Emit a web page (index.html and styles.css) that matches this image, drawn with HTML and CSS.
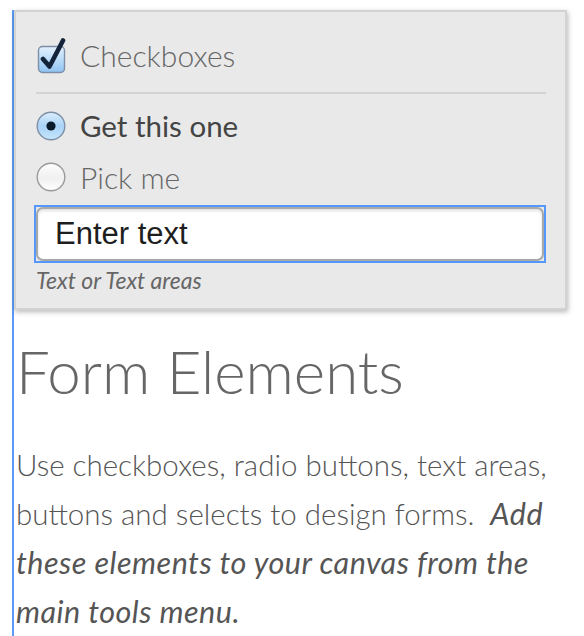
FILE: index.html
```html
<!DOCTYPE html>
<html>
<head>
<meta charset="utf-8">
<link rel="stylesheet" href="styles.css">
</head>
<body>
<div class="canvas">
  <div class="panel">
    <label class="row row-check">
      <svg class="box" width="30" height="36" viewBox="0 0 30 36">
        <defs>
          <linearGradient id="cb" x1="0" y1="0" x2="0" y2="1">
            <stop offset="0" stop-color="#e4f1fd"/>
            <stop offset="0.5" stop-color="#b9dbf8"/>
            <stop offset="1" stop-color="#8fc3f2"/>
          </linearGradient>
        </defs>
        <rect x="1.5" y="8.5" width="26" height="26" rx="4" fill="url(#cb)" stroke="#7d8ea6" stroke-width="1.4"/>
        <path d="M6 21 L12.5 28.5 L26 2.5" fill="none" stroke="#12233a" stroke-width="4.6" stroke-linecap="round" stroke-linejoin="round"/>
      </svg>
      <span class="label light">Checkboxes</span>
    </label>
    <div class="divider"></div>
    <label class="row row-radio1">
      <svg class="radio" width="30" height="30" viewBox="0 0 30 30">
        <defs>
          <linearGradient id="rb" x1="0" y1="0" x2="0" y2="1">
            <stop offset="0" stop-color="#dbeefd"/>
            <stop offset="0.5" stop-color="#a9d2f7"/>
            <stop offset="1" stop-color="#c6e6fc"/>
          </linearGradient>
        </defs>
        <circle cx="15" cy="15" r="13.8" fill="url(#rb)" stroke="#7f8fa6" stroke-width="1.4"/>
        <circle cx="15" cy="15" r="4.6" fill="#0d1a2c"/>
      </svg>
      <span class="label strong">Get this one</span>
    </label>
    <label class="row row-radio2">
      <svg class="radio" width="30" height="30" viewBox="0 0 30 30">
        <defs>
          <linearGradient id="rw" x1="0" y1="0" x2="0" y2="1">
            <stop offset="0" stop-color="#fdfdfd"/>
            <stop offset="0.55" stop-color="#f0f0f0"/>
            <stop offset="1" stop-color="#ffffff"/>
          </linearGradient>
        </defs>
        <circle cx="15" cy="15" r="13.8" fill="url(#rw)" stroke="#9a9a9a" stroke-width="1.4"/>
      </svg>
      <span class="label light">Pick me</span>
    </label>
    <div class="field">
      <div class="input">Enter text</div>
    </div>
    <div class="caption">Text or Text areas</div>
  </div>
  <h1 class="title">Form Elements</h1>
  <p class="desc">Use checkboxes, radio buttons, text areas,<br>buttons and selects to design forms.&nbsp; <em>Add<br>these elements to your canvas from the<br>main tools menu.</em></p>
</div>
</body>
</html>
```
FILE: styles.css
```css
html, body {
  margin: 0;
  padding: 0;
  background: #ffffff;
}
body {
  width: 584px;
  height: 636px;
  overflow: hidden;
  font-family: "Lato", "Liberation Sans", sans-serif;
}
.canvas {
  margin-left: 12px;
  border-left: 2px solid #5b9bf7;
  min-height: 636px;
  box-sizing: border-box;
}
.panel {
  margin-top: 10px;
  width: 553px;
  box-sizing: border-box;
  background: #e9e9e9;
  border: 2px solid #d2d2d2;
  box-shadow: 1px 2px 5px rgba(0, 0, 0, 0.28);
  padding: 23px 19px 16px 20px;
}
.row {
  display: flex;
  align-items: center;
  height: 40px;
}
.row-check {
  align-items: flex-end;
}
.row-check .box {
  margin-left: 1px;
  margin-bottom: 1px;
}
.row-check .label {
  margin-left: 13px;
  padding-bottom: 2px;
}
.label {
  font-size: 30px;
  line-height: 36px;
}
.light {
  font-weight: 300;
  color: #666;
}
.strong {
  font-size: 29.5px;
  font-weight: 400;
  color: #444;
}
.radio {
  margin-left: 0;
  margin-right: 14px;
}
.divider {
  height: 2px;
  background: #d3d3d3;
  margin-top: 17px;
}
.row-radio1 {
  margin-top: 12px;
}
.row-radio2 {
  margin-top: 11px;
}
.field {
  margin-top: 8px;
  margin-left: -2px;
  border: 2px solid #5597fb;
  height: 58px;
  box-sizing: border-box;
}
.input {
  height: 100%;
  box-sizing: border-box;
  background: #fff;
  border: 2px solid #a9a9a9;
  border-radius: 7px;
  box-shadow: inset 0 2px 3px rgba(0, 0, 0, 0.12);
  font-family: "Liberation Sans", Arial, sans-serif;
  font-size: 31px;
  line-height: 50px;
  color: #1e1e1e;
  padding-left: 17px;
}
.caption {
  margin-top: 5px;
  font-style: italic;
  font-size: 23px;
  line-height: 24px;
  color: #666;
}
.title {
  margin: 21px 0 0 2px;
  font-weight: 300;
  font-size: 60px;
  line-height: 80px;
  color: #666;
}
.desc {
  margin: 30px 0 0 2px;
  font-weight: 300;
  font-size: 29.5px;
  line-height: 48px;
  color: #555;
  white-space: nowrap;
}
.desc em {
  font-style: italic;
  font-weight: 400;
  font-size: 30.5px;
  letter-spacing: 0.5px;
  color: #555;
}
```
